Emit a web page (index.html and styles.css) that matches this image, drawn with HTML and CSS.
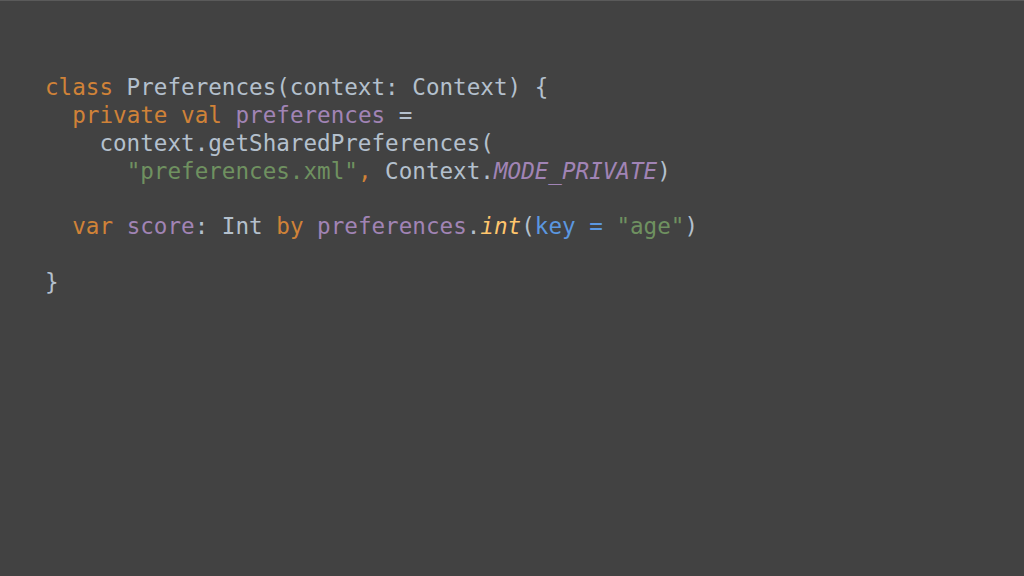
FILE: index.html
```html
<!DOCTYPE html>
<html>
<head>
<meta charset="utf-8">
<link rel="stylesheet" href="styles.css">
</head>
<body>
<main class="slide">
<pre class="code"><span class="kw">class</span> Preferences(context: Context) {
  <span class="kw">private val</span> <span class="prop">preferences</span> =
    context.getSharedPreferences(
      <span class="str">"preferences.xml"</span><span class="kw">,</span> Context.<span class="const">MODE_PRIVATE</span>)

  <span class="kw">var</span> <span class="prop">score</span>: Int <span class="kw">by</span> <span class="prop">preferences</span>.<span class="fn">int</span>(<span class="arg">key =</span> <span class="str">"age"</span>)

}</pre>
</main>
</body>
</html>
```
FILE: styles.css
```css
html, body {
  margin: 0;
  padding: 0;
  background: #424242;
}
.slide {
  width: 1024px;
  height: 576px;
  box-sizing: border-box;
  border-top: 1px solid #5a5a5a;
  background: #424242;
  padding: 73px 0 0 45px;
  overflow: hidden;
}
.code {
  margin: 0;
  font-family: "DejaVu Sans Mono", "Liberation Mono", monospace;
  font-size: 22.6px;
  line-height: 27.85px;
  color: #b4c0cd;
}
.kw { color: #d08238; }
.prop { color: #a184b5; }
.str { color: #6f9160; }
.const { color: #a184b5; font-style: italic; }
.fn { color: #ffc66d; font-style: italic; }
.arg { color: #5b97e0; }
```
